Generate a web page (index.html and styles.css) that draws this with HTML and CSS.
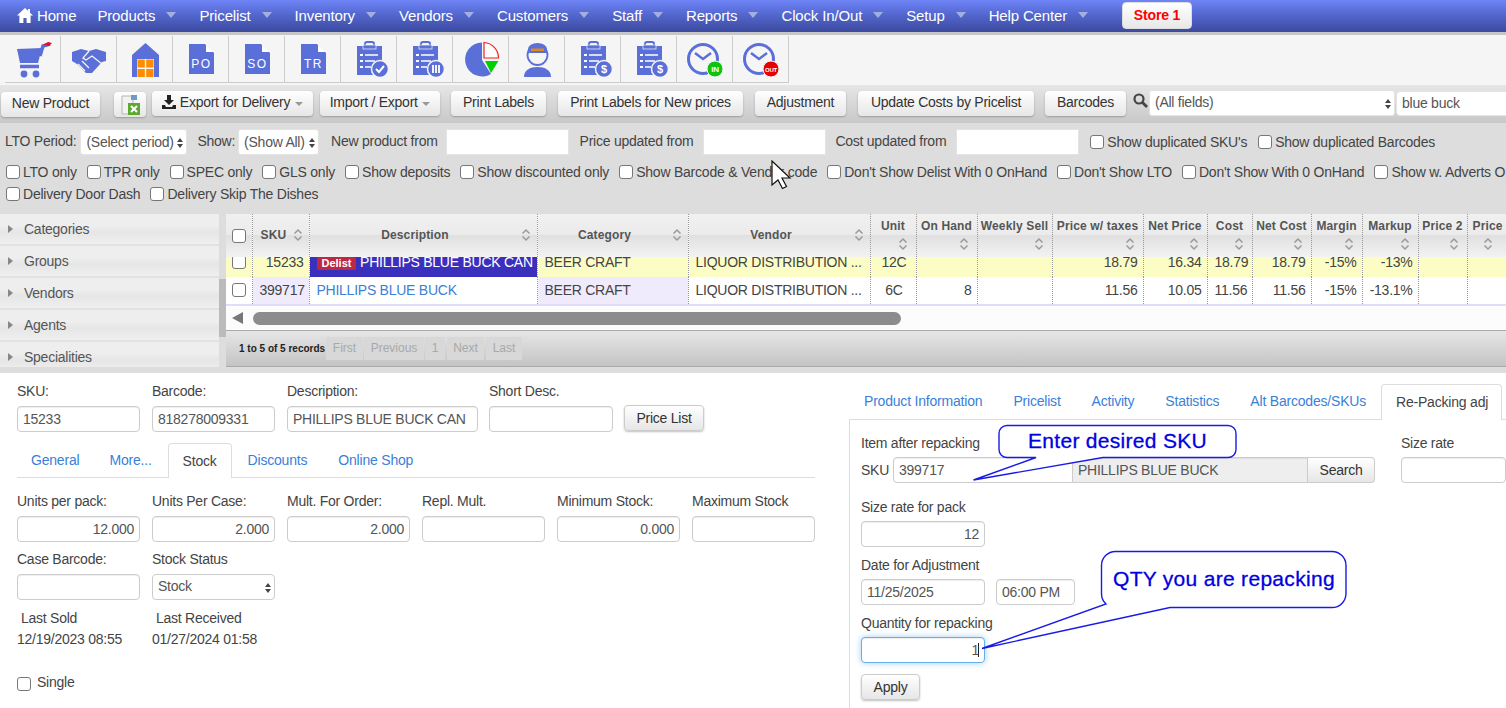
FILE: index.html
```html
<!DOCTYPE html>
<html lang="en">
<head>
    <meta charset="UTF-8">
    <meta name="viewport" content="width=device-width, initial-scale=1.0">
    <title>Products</title>
    <link rel="stylesheet" href="styles.css">
</head>
<body>
<svg class="defs" width="0" height="0">
    <symbol id="sort" viewBox="0 0 10 14">
        <path d="M1.500 5.500 5 2l3.500 3.500M1.500 8.500 5 12l3.500-3.500" fill="none" stroke="#9a9a9a" stroke-width="1.500"/>
    </symbol>
    <symbol id="board" viewBox="0 0 56 46">
        <rect x="16" y="10" width="25" height="29" fill="#5b6fd8"/>
        <path d="M24 10V8a2 2 0 0 1 2-2h5a2 2 0 0 1 2 2v2" fill="none" stroke="#5b6fd8" stroke-width="2"/>
        <rect x="22" y="9" width="13" height="4" fill="#5b6fd8" stroke="#f5f5f5" stroke-width=".7"/>
        <path d="M19 18h3v2h-3zM19 24h3v2h-3zM19 30h3v2h-3z" fill="#fff"/>
        <path d="M24 19h13M24 25h10M24 31h6" stroke="#fff" stroke-width="1.600"/>
        <circle cx="39" cy="33" r="8.500" fill="#5b6fd8" stroke="#f5f5f5" stroke-width="1.500"/>
    </symbol>
</svg>

<nav class="navbar">
    <a class="nav-home">
        <svg width="16" height="15" viewBox="0 0 16 15"><path d="M8 0 0 7.500h2.400V15h4v-5h3.200v5h4V7.500H16L13 4.700V1h-2v1.800z" fill="#fff"/></svg>
        Home
    </a>
    <a class="nav-item">Products</a>
    <a class="nav-item">Pricelist</a>
    <a class="nav-item">Inventory</a>
    <a class="nav-item">Vendors</a>
    <a class="nav-item">Customers</a>
    <a class="nav-item">Staff</a>
    <a class="nav-item">Reports</a>
    <a class="nav-item">Clock In/Out</a>
    <a class="nav-item">Setup</a>
    <a class="nav-item">Help Center</a>
    <button class="store-btn">Store 1</button>
</nav>

<div class="icon-bar">
    <div class="icon-cell"><svg viewBox="0 0 56 46">
        <path d="M12 13l25-1-4 15H15z" fill="#5b6fd8"/>
        <path d="M35 20l3-10 7-2M15 30.500h19" fill="none" stroke="#5b6fd8" stroke-width="3.500"/>
        <path d="M38 9l5-3 4 1-3 3z" fill="#e81123"/>
        <circle cx="19" cy="38" r="3.400" fill="#5b6fd8"/><circle cx="31" cy="38" r="3.400" fill="#5b6fd8"/>
    </svg></div>
    <div class="icon-cell"><svg viewBox="0 0 56 46">
        <path d="M11 16l9-3 8 2 7-2 10 3v9l-4 1-10 11h-6l-9-9-5-3z" fill="#5b6fd8"/>
        <path d="M28 15l-6 7 3 2 6-4 10 8M17 28l7 7M21 25l7 7" fill="none" stroke="#f5f5f5" stroke-width="1.300"/>
    </svg></div>
    <div class="icon-cell"><svg viewBox="0 0 56 46">
        <path d="M28.500 7 42 19v22H15V19z" fill="#5b6fd8"/>
        <rect x="20" y="23" width="17" height="18" fill="#f5f5f5"/>
        <path d="M20.500 23.500h7.300v8h-7.300zM29.200 23.500h7.300v8h-7.300zM20.500 33h7.300v8h-7.300zM29.200 33h7.300v8h-7.300z" fill="#ff8c00"/>
    </svg></div>
    <div class="icon-cell"><svg viewBox="0 0 56 46">
        <path d="M16 8h16l9 9v21H16z" fill="#5b6fd8"/><path d="M33 8.500l7.500 7.500H33z" fill="#fff"/>
        <text x="28.500" y="32" class="doc-text">PO</text>
    </svg></div>
    <div class="icon-cell"><svg viewBox="0 0 56 46">
        <path d="M16 8h16l9 9v21H16z" fill="#5b6fd8"/><path d="M33 8.500l7.500 7.500H33z" fill="#fff"/>
        <text x="28.500" y="32" class="doc-text">SO</text>
    </svg></div>
    <div class="icon-cell"><svg viewBox="0 0 56 46">
        <path d="M16 8h16l9 9v21H16z" fill="#5b6fd8"/><path d="M33 8.500l7.500 7.500H33z" fill="#fff"/>
        <text x="28.500" y="32" class="doc-text">TR</text>
    </svg></div>
    <div class="icon-cell"><svg viewBox="0 0 56 46">
        <use href="#board"/><path d="M35 33l3 3 5-6" fill="none" stroke="#fff" stroke-width="2"/>
    </svg></div>
    <div class="icon-cell"><svg viewBox="0 0 56 46">
        <use href="#board"/><path d="M36 29v8M39 29v8M42 29v8" stroke="#fff" stroke-width="1.800"/>
    </svg></div>
    <div class="icon-cell"><svg viewBox="0 0 56 46">
        <path d="M29 6.500A17 17 0 1 0 38 38L29 24z" fill="#5b6fd8"/>
        <path d="M31 6.500A15.500 15.500 0 0 1 45.500 22H31z" fill="#fff" stroke="#f02020" stroke-width="1.200"/>
        <path d="M32 25h13.500L38 37z" fill="#00d000"/>
    </svg></div>
    <div class="icon-cell"><svg viewBox="0 0 56 46">
        <path d="M15 41c0-7 6-10 13.500-10S42 34 42 41z" fill="#5b6fd8"/>
        <circle cx="28.500" cy="19" r="10" fill="#f5f5f5" stroke="#5b6fd8" stroke-width="1.800"/>
        <path d="M19 17V13a9.500 6 0 0 1 19 0v4z" fill="#5b6fd8"/>
        <rect x="22" y="12.500" width="13" height="2.500" fill="#e08a1e"/>
    </svg></div>
    <div class="icon-cell"><svg viewBox="0 0 56 46">
        <use href="#board"/><text x="39" y="37" class="badge-text">$</text>
    </svg></div>
    <div class="icon-cell"><svg viewBox="0 0 56 46">
        <use href="#board"/><text x="39" y="37" class="badge-text">$</text>
    </svg></div>
    <div class="icon-cell"><svg viewBox="0 0 56 46">
        <circle cx="26" cy="23" r="14.500" fill="none" stroke="#5b6fd8" stroke-width="3"/>
        <path d="M18 17l8 6 8-6" fill="none" stroke="#5b6fd8" stroke-width="2.500"/>
        <circle cx="38" cy="33" r="8" fill="#0ec40e" stroke="#f5f5f5" stroke-width="1"/>
        <text x="38" y="36" class="clock-text">IN</text>
    </svg></div>
    <div class="icon-cell"><svg viewBox="0 0 56 46">
        <circle cx="26" cy="23" r="14.500" fill="none" stroke="#5b6fd8" stroke-width="3"/>
        <path d="M18 17l8 6 8-6" fill="none" stroke="#5b6fd8" stroke-width="2.500"/>
        <circle cx="38" cy="33" r="8" fill="#e80000" stroke="#f5f5f5" stroke-width="1"/>
        <text x="38" y="35.500" class="clock-text small">OUT</text>
    </svg></div>
</div>

<div class="toolbar">
    <button class="btn w-new">New Product</button>
    <button class="btn w-xls"><svg width="22" height="22" viewBox="0 0 22 22">
        <path d="M3 2h11v18H3z" fill="#f2f2f2" stroke="#b5b5b5"/>
        <path d="M12 1h6v5h-6z" fill="#6d9bc4"/>
        <rect x="9" y="9" width="12" height="12" fill="#5ea832"/>
        <path d="M12 12l6 6M18 12l-6 6" stroke="#fff" stroke-width="2"/>
    </svg></button>
    <button class="btn w-export"><svg width="14" height="14" viewBox="0 0 14 14"><path d="M5 0h4v5h3L7 10 2 5h3zM0 10h3l1 2h6l1-2h3v4H0z" fill="#222"/></svg> Export for Delivery <i class="btn-caret"></i></button>
    <button class="btn w-import">Import / Export <i class="btn-caret"></i></button>
    <button class="btn w-labels">Print Labels</button>
    <button class="btn w-newprices">Print Labels for New prices</button>
    <button class="btn w-adjust">Adjustment</button>
    <button class="btn w-update">Update Costs by Pricelist</button>
    <button class="btn w-barcodes">Barcodes</button>
    <svg class="search-icon" width="15" height="15" viewBox="0 0 15 15"><circle cx="6" cy="6" r="4.500" fill="none" stroke="#444" stroke-width="2.200"/><path d="M9.500 9.500 14 14" stroke="#444" stroke-width="2.800"/></svg>
    <div class="select white w-allfields">(All fields)</div>
    <input class="field w-search" type="text" value="blue buck">
</div>

<section class="filters">
    <div class="filter-row">
        <span class="flt-label lbl-period">LTO Period:</span>
        <div class="select white w-period">(Select period)</div>
        <span class="flt-label lbl-show">Show:</span>
        <div class="select white w-show">(Show All)</div>
        <span class="flt-label lbl-new">New product from</span>
        <input class="plain-input" type="text">
        <span class="flt-label lbl-price">Price updated from</span>
        <input class="plain-input" type="text">
        <span class="flt-label lbl-cost">Cost updated from</span>
        <input class="plain-input" type="text">
        <label class="check"><input type="checkbox">Show duplicated SKU's</label>
        <label class="check"><input type="checkbox">Show duplicated Barcodes</label>
    </div>
    <div class="check-row">
        <label class="check"><input type="checkbox">LTO only</label>
        <label class="check"><input type="checkbox">TPR only</label>
        <label class="check"><input type="checkbox">SPEC only</label>
        <label class="check"><input type="checkbox">GLS only</label>
        <label class="check"><input type="checkbox">Show deposits</label>
        <label class="check"><input type="checkbox">Show discounted only</label>
        <label class="check"><input type="checkbox">Show Barcode &amp; Vendor code</label>
        <label class="check"><input type="checkbox">Don't Show Delist With 0 OnHand</label>
        <label class="check"><input type="checkbox">Don't Show LTO</label>
        <label class="check"><input type="checkbox">Don't Show With 0 OnHand</label>
        <label class="check"><input type="checkbox">Show w. Adverts Only</label>
    </div>
    <div class="check-row">
        <label class="check"><input type="checkbox">Delivery Door Dash</label>
        <label class="check"><input type="checkbox">Delivery Skip The Dishes</label>
    </div>
</section>

<section class="main">
    <aside class="sidebar">
        <div class="side-item">Categories</div>
        <div class="side-item">Groups</div>
        <div class="side-item">Vendors</div>
        <div class="side-item">Agents</div>
        <div class="side-item">Specialities</div>
    </aside>
    <div class="side-scroll"><div class="side-thumb"></div></div>
    <div class="grid-wrap">
        <table class="grid head">
            <colgroup>
                <col class="c-chk"><col class="c-sku"><col class="c-desc"><col class="c-cat"><col class="c-ven">
                <col class="c-unit"><col class="c-hand"><col class="c-week"><col class="c-tax"><col class="c-net">
                <col class="c-cost"><col class="c-ncost"><col class="c-mar"><col class="c-mark"><col class="c-p2"><col class="c-p3">
            </colgroup>
            <tr>
                <th><input type="checkbox"></th>
                <th class="inline"><span>SKU</span><svg class="sort"><use href="#sort"/></svg></th>
                <th class="wide"><span>Description</span><svg class="sort"><use href="#sort"/></svg></th>
                <th class="wide"><span>Category</span><svg class="sort"><use href="#sort"/></svg></th>
                <th class="wide"><span>Vendor</span><svg class="sort"><use href="#sort"/></svg></th>
                <th><span>Unit</span><svg class="sort"><use href="#sort"/></svg></th>
                <th><span>On Hand</span><svg class="sort"><use href="#sort"/></svg></th>
                <th><span>Weekly Sell</span><svg class="sort"><use href="#sort"/></svg></th>
                <th><span>Price w/ taxes</span><svg class="sort"><use href="#sort"/></svg></th>
                <th><span>Net Price</span><svg class="sort"><use href="#sort"/></svg></th>
                <th><span>Cost</span><svg class="sort"><use href="#sort"/></svg></th>
                <th><span>Net Cost</span><svg class="sort"><use href="#sort"/></svg></th>
                <th><span>Margin</span><svg class="sort"><use href="#sort"/></svg></th>
                <th><span>Markup</span><svg class="sort"><use href="#sort"/></svg></th>
                <th><span>Price 2</span><svg class="sort"><use href="#sort"/></svg></th>
                <th class="cut"><span>Price 3</span><svg class="sort"><use href="#sort"/></svg></th>
            </tr>
        </table>
        <div class="grid-body">
            <table class="grid rows">
                <colgroup>
                    <col class="c-chk"><col class="c-sku"><col class="c-desc"><col class="c-cat"><col class="c-ven">
                    <col class="c-unit"><col class="c-hand"><col class="c-week"><col class="c-tax"><col class="c-net">
                    <col class="c-cost"><col class="c-ncost"><col class="c-mar"><col class="c-mark"><col class="c-p2"><col class="c-p3">
                </colgroup>
                <tr class="row-delist">
                    <td class="mid"><input type="checkbox"></td>
                    <td class="num">15233</td>
                    <td class="desc-delist"><span class="badge">Delist</span> PHILLIPS BLUE BUCK CAN</td>
                    <td>BEER CRAFT</td>
                    <td>LIQUOR DISTRIBUTION ...</td>
                    <td class="mid">12C</td><td></td><td></td>
                    <td class="num">18.79</td><td class="num">16.34</td><td class="num">18.79</td><td class="num">18.79</td>
                    <td class="num">-15%</td><td class="num">-13%</td><td></td><td></td>
                </tr>
                <tr class="row-plain">
                    <td class="mid"><input type="checkbox"></td>
                    <td class="num lilac">399717</td>
                    <td class="link">PHILLIPS BLUE BUCK</td>
                    <td class="lilac">BEER CRAFT</td>
                    <td>LIQUOR DISTRIBUTION ...</td>
                    <td class="mid">6C</td><td class="num">8</td><td></td>
                    <td class="num">11.56</td><td class="num">10.05</td><td class="num">11.56</td><td class="num">11.56</td>
                    <td class="num">-15%</td><td class="num">-13.1%</td><td></td><td></td>
                </tr>
            </table>
        </div>
        <div class="h-scroll">
            <i class="h-arrow"></i>
            <div class="h-thumb"></div>
        </div>
        <div class="pager">
            <span class="pager-info">1 to 5 of 5 records</span>
            <span class="pg pg-first">First</span>
            <span class="pg pg-prev">Previous</span>
            <span class="pg pg-one">1</span>
            <span class="pg pg-next">Next</span>
            <span class="pg pg-last">Last</span>
        </div>
    </div>
</section>

<section class="detail">
    <div class="left-panel">
        <div class="form-row">
            <div class="fld"><label>SKU:</label><input class="field" type="text" value="15233"></div>
            <div class="fld"><label>Barcode:</label><input class="field" type="text" value="818278009331"></div>
            <div class="fld w-desc"><label>Description:</label><input class="field" type="text" value="PHILLIPS BLUE BUCK CAN"></div>
            <div class="fld w-short"><label>Short Desc.</label><input class="field" type="text"></div>
            <button class="btn price-list">Price List</button>
        </div>
        <div class="tabs tabs-left">
            <a class="tab">General</a>
            <a class="tab">More...</a>
            <a class="tab active">Stock</a>
            <a class="tab">Discounts</a>
            <a class="tab">Online Shop</a>
        </div>
        <div class="form-row stock-row">
            <div class="fld"><label>Units per pack:</label><input class="field right" type="text" value="12.000"></div>
            <div class="fld"><label>Units Per Case:</label><input class="field right" type="text" value="2.000"></div>
            <div class="fld"><label>Mult. For Order:</label><input class="field right" type="text" value="2.000"></div>
            <div class="fld"><label>Repl. Mult.</label><input class="field right" type="text"></div>
            <div class="fld"><label>Minimum Stock:</label><input class="field right" type="text" value="0.000"></div>
            <div class="fld"><label>Maximum Stock</label><input class="field right" type="text"></div>
        </div>
        <div class="form-row case-row">
            <div class="fld"><label>Case Barcode:</label><input class="field" type="text"></div>
            <div class="fld"><label>Stock Status</label><div class="select bordered">Stock</div></div>
        </div>
        <div class="form-row last-row">
            <div class="fld"><span class="last-head">Last Sold</span><span class="last-val">12/19/2023 08:55</span></div>
            <div class="fld"><span class="last-head">Last Received</span><span class="last-val">01/27/2024 01:58</span></div>
        </div>
        <label class="check single"><input type="checkbox">Single</label>
    </div>

    <div class="right-panel">
        <div class="tabs tabs-right">
            <a class="tab">Product Information</a>
            <a class="tab">Pricelist</a>
            <a class="tab">Activity</a>
            <a class="tab">Statistics</a>
            <a class="tab">Alt Barcodes/SKUs</a>
            <a class="tab active">Re-Packing adj</a>
        </div>
        <div class="repack">
            <div class="repack-top">
                <div class="repack-item">
                    <label>Item after repacking</label>
                    <div class="sku-group">
                        <span>SKU</span>
                        <input class="field sku-input" type="text" value="399717">
                        <input class="field sku-name" type="text" value="PHILLIPS BLUE BUCK" readonly>
                        <button class="btn sku-search">Search</button>
                    </div>
                </div>
                <div class="repack-rate">
                    <label>Size rate</label>
                    <input class="field" type="text">
                </div>
            </div>
            <div class="fld-r"><label>Size rate for pack</label><input class="field right small" type="text" value="12"></div>
            <div class="fld-r">
                <label>Date for Adjustment</label>
                <div class="date-group">
                    <input class="field small" type="text" value="11/25/2025">
                    <input class="field time" type="text" value="06:00 PM">
                </div>
            </div>
            <div class="fld-r"><label>Quantity for repacking</label><div class="caret-wrap"><input class="field right small focus" type="text" value="1"></div></div>
            <button class="btn apply">Apply</button>
        </div>
    </div>
</section>

<!-- annotations drawn on top of the screenshot -->
<div class="callout call-sku">
    <svg width="270" height="62" viewBox="970 422 270 62"><path d="M1007 425.500h221a8 8 0 0 1 8 8v16a8 8 0 0 1-8 8h-125L973.500 480 1036 457.500h-29a8 8 0 0 1-8-8v-16a8 8 0 0 1 8-8z" fill="#fff" stroke="#1a1ae6" stroke-width="1.400"/></svg>
    <span>Enter desired SKU</span>
</div>
<div class="callout call-qty">
    <svg width="370" height="102" viewBox="980 548 370 102"><path d="M1116 551.500h216a14 14 0 0 1 14 14v28a14 14 0 0 1-14 14h-162L982 648.500l124-44.500a14 14 0 0 1-4.500-10.500v-28a14 14 0 0 1 14-14z" fill="#fff" stroke="#1a1ae6" stroke-width="1.400"/></svg>
    <span>QTY you are repacking</span>
</div>
<svg class="cursor" width="24" height="30" viewBox="0 0 24 30"><path d="M1 1v24l6-5 4.500 8.500 4-2L11 18h8z" fill="#fff" stroke="#111" stroke-width="1.200"/></svg>
</body>
</html>
```

FILE: styles.css
```css
* {
    box-sizing: border-box;
}
html, body {
    margin: 0;
    padding: 0;
    height: 708px;
    overflow: hidden;
}
body {
    position: relative;
    width: 1506px;
    font-family: "Liberation Sans", Arial, sans-serif;
    font-size: 14px;
    letter-spacing: -.25px;
    color: #444;
    background: #fff;
}
input, button {
    letter-spacing: inherit;
}
.defs {
    position: absolute;
}

/* top menu */
.navbar {
    display: flex;
    align-items: center;
    height: 35px;
    padding: 0 0 5px 17px;
    background: linear-gradient(#6f85f7 0, #5468d0 40%, #3c4a9e 91%, #c6c6c6 92%, #c6c6c6 100%);
    color: #fff;
    font-size: 15px;
    letter-spacing: -.15px;
}
.nav-home {
    display: flex;
    align-items: center;
    gap: 4px;
    margin-right: 21px;
}
.nav-item {
    display: flex;
    align-items: center;
    margin-right: 23px;
}
.nav-item::after {
    content: "";
    margin-left: 11px;
    border: 5px solid transparent;
    border-top: 6px solid #a3afe0;
    border-bottom: 0;
}
.store-btn {
    width: 70px;
    height: 27px;
    margin-left: 11px;
    border: 1px solid #ddd;
    border-radius: 4px;
    background: linear-gradient(#fff, #e8e8e8);
    color: #f00;
    font: bold 14px "Liberation Sans", Arial, sans-serif;
}

/* icon shortcuts */
.icon-bar {
    display: flex;
    height: 50px;
    padding: 1px 0 0 5px;
    background: #f5f5f5;
}
.icon-cell {
    width: 56px;
    height: 47px;
    border-right: 1px solid #ccc;
    border-bottom: 1px solid #ccc;
}
.icon-cell svg {
    display: block;
    width: 56px;
    height: 46px;
}
.doc-text {
    font: 12px "Liberation Sans", Arial, sans-serif;
    letter-spacing: 1.500px;
    fill: #fff;
    text-anchor: middle;
}
.badge-text {
    font: bold 11px "Liberation Sans", Arial, sans-serif;
    fill: #fff;
    text-anchor: middle;
}
.clock-text {
    font: bold 8px "Liberation Sans", Arial, sans-serif;
    fill: #fff;
    text-anchor: middle;
}
.clock-text.small {
    font-size: 6px;
}

/* toolbar */
.toolbar {
    display: flex;
    align-items: flex-start;
    height: 38px;
    padding-top: 6px;
    background: linear-gradient(#e6e6e6, #c8c8c8);
}
.toolbar > *, .filter-row > * {
    flex: none;
}
.btn {
    height: 25px;
    padding: 0;
    border: 0;
    border-radius: 4px;
    background: linear-gradient(#fff, #e6e6e6);
    box-shadow: 0 1px 2px rgba(0, 0, 0, .25);
    color: #333;
    font: 14px "Liberation Sans", Arial, sans-serif;
    white-space: nowrap;
}
.toolbar .btn {
    padding-bottom: 3px;
}
.btn svg {
    vertical-align: -2px;
}
.btn-caret {
    display: inline-block;
    margin-left: 1px;
    border: 4px solid transparent;
    border-top: 4px solid #999;
    border-bottom: 0;
    vertical-align: 1px;
}
.w-new { width: 99px; margin: 1px 0 0 1px; }
.toolbar .w-xls { width: 32px; margin: 1px 0 0 14px; padding-bottom: 0; }
.w-xls svg { vertical-align: middle; }
.w-export { width: 161px; margin-left: 6px; }
.w-import { width: 120px; margin-left: 7px; }
.w-labels { width: 95px; margin-left: 11px; }
.w-newprices { width: 185px; margin-left: 12px; }
.w-adjust { width: 91px; margin-left: 12px; }
.w-update { width: 176px; margin-left: 12px; }
.w-barcodes { width: 81px; margin-left: 11px; }
.search-icon {
    margin: 2px 1px 0 7px;
}
.select {
    position: relative;
    height: 26px;
    padding: 0 0 0 5px;
    border-radius: 3px;
    color: #555;
    line-height: 24px;
}
.select.white {
    background: #fff;
    border: 1px solid #e4e4e4;
}
.select.bordered {
    background: #fff;
    border: 1px solid #ccc;
    border-radius: 4px;
    line-height: 22px;
}
.select::before, .select::after {
    content: "";
    position: absolute;
    right: 3px;
    border: 3px solid transparent;
}
.select::before {
    top: 8px;
    border-top: 0;
    border-bottom: 4px solid #444;
}
.select::after {
    top: 14px;
    border-bottom: 0;
    border-top: 4px solid #444;
}
.w-allfields {
    width: 246px;
    margin-top: -1px;
    line-height: 22px;
}
.toolbar .w-search {
    width: 130px;
    height: 25px;
    margin-left: 1px;
    padding-bottom: 1px;
    border-color: #e4e4e4;
    box-shadow: none;
}

/* filter rows */
.filters {
    height: 90px;
    padding-top: 6px;
    background: #ddd;
}
.filter-row {
    display: flex;
    align-items: center;
    height: 26px;
    padding-left: 5px;
}
.flt-label {
    margin-right: 5px;
    padding-bottom: 2px;
    white-space: nowrap;
}
.lbl-period { margin-right: 4px; }
.lbl-show { margin-right: 3px; }
.lbl-new { margin-right: 7px; }
.lbl-price { margin-right: 9px; }
.lbl-cost { margin-left: -2px; margin-right: 9px; }
.w-period { width: 107px; margin-right: 10px; white-space: nowrap; }
.w-show { width: 81px; margin-right: 12px; white-space: nowrap; }
.plain-input {
    width: 123px;
    height: 26px;
    margin: 0 11px 0 1px;
    border: 1px solid #e4e4e4;
    background: #fff;
}
.check {
    display: inline-flex;
    align-items: center;
    margin-right: 10px;
    white-space: nowrap;
}
.filter-row .check {
    margin-right: 11px;
    padding-bottom: 1px;
}
.check input, th input, td input {
    appearance: none;
    width: 14px;
    height: 14px;
    margin: 0 3px 0 0;
    border: 1px solid #777;
    border-radius: 3px;
    background: #fff;
}
.check-row {
    display: flex;
    align-items: center;
    height: 22px;
    padding-left: 6px;
    letter-spacing: -.22px;
    white-space: nowrap;
}
.filter-row + .check-row {
    margin-top: 6px;
}

/* accordion and product grid */
.main {
    display: flex;
    height: 160px;
    padding-top: 1px;
    background: #ddd;
}
.sidebar {
    width: 219px;
    height: 153px;
    overflow: hidden;
}
.side-item {
    position: relative;
    height: 32px;
    padding-left: 24px;
    border-bottom: 2px solid #e2e2e2;
    background: linear-gradient(#eee, #eee 40%, #e6e6e6 60%, #efefef);
    color: #555;
    line-height: 30px;
}
.side-item::before {
    content: "";
    position: absolute;
    left: 8px;
    top: 11px;
    border: 4px solid transparent;
    border-left: 5px solid #888;
    border-right: 0;
}
.side-scroll {
    width: 7px;
    padding-top: 65px;
}
.side-thumb {
    height: 58px;
    background: #bbb;
}
.grid-wrap {
    width: 1280px;
    height: 153px;
    overflow: hidden;
    background: #fff;
}
.grid {
    width: 1301px;
    border-collapse: collapse;
    table-layout: fixed;
}
.c-chk { width: 26px; }
.c-sku { width: 57px; }
.c-desc { width: 228px; }
.c-cat { width: 151px; }
.c-ven { width: 182px; }
.c-unit { width: 46px; }
.c-hand { width: 61px; }
.c-week { width: 75px; }
.c-tax { width: 91px; }
.c-net { width: 64px; }
.c-cost { width: 45px; }
.c-ncost { width: 59px; }
.c-mar { width: 51px; }
.c-mark { width: 56px; }
.c-p2 { width: 49px; }
.c-p3 { width: 60px; }
.head th {
    height: 43px;
    padding: 5px 0 0;
    border-right: 1px dotted #999;
    background: linear-gradient(#f0f0f0, #ebebeb 48%, #e0e0e0 50%, #f2f2f2);
    color: #555;
    font-size: 12px;
    font-weight: bold;
    letter-spacing: .15px;
    vertical-align: top;
    text-align: center;
    white-space: nowrap;
}
.head th span {
    display: block;
    height: 15px;
}
.sort {
    display: block;
    width: 10px;
    height: 14px;
    margin: 3px 8px 0 auto;
}
.head th:first-child input {
    margin: 10px 0 0 1px;
}
.head th.inline, .head th.wide {
    position: relative;
    padding-top: 14px;
}
.head th.inline {
    padding-right: 14px;
}
.head th.wide {
    padding-right: 16px;
}
.head th.wide .sort, .head th.inline .sort {
    position: absolute;
    top: 14px;
    right: 6px;
    margin: 0;
}
.head th.cut {
    text-align: left;
    padding-left: 5px;
}
.head th.cut .sort {
    margin: 3px 0 0 10px;
}
.grid-body {
    height: 50px;
    overflow: hidden;
}
.rows {
    margin-top: -8px;
}
.rows td {
    height: 28px;
    padding: 0 5px 2px 7px;
    border-right: 1px dotted #999;
    color: #444;
    white-space: nowrap;
    overflow: hidden;
}
.rows td input {
    display: block;
    margin: 0 auto;
}
.rows td:first-child {
    padding: 0 0 2px;
}
.row-delist td {
    background: #fbfdc4;
}
.row-plain td {
    border-bottom: 2px solid #e2dcfa;
    background: #fff;
}
.rows td.lilac {
    background: #efebfd;
}
.rows td.num {
    text-align: right;
}
.rows td.mid {
    text-align: center;
}
.rows td.link {
    color: #3a7fd8;
}
.rows td.desc-delist {
    background: #3b2fbd;
    color: #fff;
}
.badge {
    display: inline-block;
    padding: 0 5px;
    border-radius: 2px;
    background: #bb2a42;
    color: #fff;
    font-size: 11px;
    font-weight: bold;
    letter-spacing: 0;
    line-height: 13px;
}
.h-scroll {
    position: relative;
    height: 23px;
    background: #fcfcfc;
}
.h-arrow {
    position: absolute;
    left: 6px;
    top: 5px;
    border: 6px solid transparent;
    border-right: 11px solid #777;
    border-left: 0;
}
.h-thumb {
    position: absolute;
    left: 27px;
    top: 5px;
    width: 648px;
    height: 13px;
    border-radius: 7px;
    background: #8c8c8c;
}
.pager {
    display: flex;
    align-items: center;
    height: 37px;
    padding-left: 13px;
    border-top: 1px solid #aaa;
    border-bottom: 1px solid #aaa;
    background: linear-gradient(#e6e6e6, #c4c4c4);
    font-size: 12px;
    letter-spacing: 0;
}
.pager-info {
    width: 87px;
    color: #222;
    font-size: 10px;
    font-weight: bold;
    white-space: nowrap;
}
.pg {
    height: 23px;
    margin-right: 1px;
    background: #d8d8d8;
    color: #a8a8a8;
    line-height: 23px;
    text-align: center;
}
.pg-first { width: 37px; }
.pg-prev { width: 60px; }
.pg-one { width: 20px; margin-right: 2px; }
.pg-next { width: 37px; margin-right: 2px; }
.pg-last { width: 36px; }

/* lower forms */
.field {
    display: block;
    width: 100%;
    height: 26px;
    padding: 0 5px;
    border: 1px solid #ccc;
    border-radius: 4px;
    background: #fff;
    box-shadow: inset 0 1px 1px rgba(0, 0, 0, .07);
    color: #555;
    font: 14px "Liberation Sans", Arial, sans-serif;
}
.field.right {
    text-align: right;
}
.detail {
    display: flex;
    height: 335px;
}
.left-panel {
    width: 849px;
    padding: 8px 0 0 17px;
}
.form-row {
    display: flex;
    gap: 12px;
}
.fld {
    width: 123px;
}
.fld label, .fld-r label, .repack-item label, .repack-rate label {
    display: block;
    height: 20px;
    line-height: 20px;
    margin-bottom: 5px;
    white-space: nowrap;
}
.w-desc { width: 191px; }
.w-short { width: 124px; margin-left: -1px; }
.price-list {
    width: 80px;
    height: 26px;
    margin: 24px 0 0 -1px;
    padding-bottom: 1px;
    border: 1px solid #ccc;
}
.tabs {
    display: flex;
    border-bottom: 1px solid #ddd;
    letter-spacing: -.2px;
}
.tab {
    margin-right: 1px;
    padding: 0 15px;
    color: #3a7fd8;
    white-space: nowrap;
}
.tab.active {
    margin-bottom: -1px;
    padding: 0 14px;
    background: #fff;
    border: 1px solid #ddd;
    border-bottom: 0;
    border-radius: 4px 4px 0 0;
    color: #444;
}
.tabs-left {
    width: 798px;
    height: 35px;
    margin-top: 11px;
    line-height: 35px;
}
.tabs-left .tab:first-child {
    margin-left: -1px;
    margin-right: 0;
}
.tabs-right {
    height: 36px;
    line-height: 34px;
}
.tabs-right .tab.active {
    margin-left: -1px;
    width: 121px;
}
.stock-row {
    margin-top: 13px;
}
.case-row {
    margin-top: 7px;
}
.last-row {
    margin-top: 8px;
}
.last-head, .last-val {
    display: block;
    height: 20px;
    line-height: 20px;
    white-space: nowrap;
}
.last-head {
    padding-left: 4px;
}
.last-val {
    margin-top: 1px;
}
.single {
    margin-top: 24px;
}
.single input {
    margin-top: 4px;
    margin-right: 6px;
}
.right-panel {
    width: 657px;
    padding-top: 11px;
}
.repack {
    height: 290px;
    padding: 13px 0 0 11px;
    border-left: 1px solid #ddd;
}
.repack-top {
    display: flex;
    gap: 26px;
}
.repack-item {
    width: 514px;
}
.repack-item label, .repack-rate label {
    margin-bottom: 4px;
}
.sku-group {
    display: flex;
    align-items: center;
}
.sku-group span {
    width: 32px;
}
.sku-input {
    width: 180px;
    border-radius: 4px 0 0 4px;
}
.sku-name {
    width: 235px;
    border-left: 0;
    border-radius: 0;
    background: #eee;
}
.sku-search {
    width: 67px;
    height: 26px;
    border: 1px solid #ccc;
    border-left: 0;
    border-radius: 0 4px 4px 0;
    box-shadow: none;
}
.repack-rate {
    width: 120px;
}
.fld-r {
    margin-top: 14px;
}
.fld-r label {
    margin-bottom: 4px;
}
.fld-r + .fld-r {
    margin-top: 8px;
}
.field.small {
    width: 124px;
}
.date-group {
    display: flex;
    gap: 11px;
}
.field.time {
    width: 79px;
}
.caret-wrap {
    position: relative;
    width: 124px;
}
.caret-wrap::after {
    content: "";
    position: absolute;
    right: 6px;
    top: 6px;
    width: 1px;
    height: 14px;
    background: #222;
}
.field.focus {
    border-color: #66afe9;
    box-shadow: inset 0 1px 1px rgba(0, 0, 0, .07), 0 0 6px rgba(102, 175, 233, .6);
}
.apply {
    display: block;
    width: 59px;
    height: 26px;
    margin-top: 11px;
    border: 1px solid #ccc;
}

/* callouts and mouse pointer sit over the page */
.callout {
    position: absolute;
    color: #0000e0;
    font-size: 21px;
    letter-spacing: .3px;
    -webkit-text-stroke: .3px #0000e0;
    white-space: nowrap;
}
.callout svg {
    display: block;
}
.callout span {
    position: absolute;
}
.call-sku {
    left: 970px;
    top: 422px;
}
.call-sku span {
    left: 58px;
    top: 7px;
}
.call-qty {
    left: 980px;
    top: 548px;
}
.call-qty span {
    left: 133px;
    top: 19px;
}
.cursor {
    position: absolute;
    left: 771px;
    top: 160px;
}
```
